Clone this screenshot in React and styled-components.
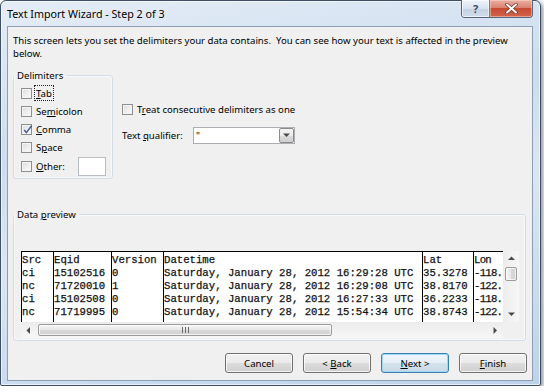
import React from "react";
import styled, { createGlobalStyle } from "styled-components";

const GlobalStyle = createGlobalStyle`
  body {
    margin: 0;
    background: #ffffff;
  }
`;

const UI_FONT = `"Noto Sans", "Open Sans", sans-serif`;
const MONO_FONT = `"Liberation Mono", "Courier New", monospace`;

const Window = styled.div`
  box-sizing: border-box;
  width: 541px;
  height: 386px;
  border: 1px solid #3d5068;
  border-radius: 6px 6px 2px 2px;
  padding: 0 7px 4px 6px;
  display: flex;
  flex-direction: column;
  background: linear-gradient(170deg, #e4edf7 0%, #cddcee 35%, #dbe6f3 55%, #bed3ea 100%);
  box-shadow: 2px 2px 5px rgba(0, 0, 0, 0.45), inset 0 0 0 1px rgba(255, 255, 255, 0.6);
  font-family: ${UI_FONT};
  font-size: 9.6px;
  color: #000;
`;

const TitleBar = styled.div`
  height: 25px;
  display: flex;
  align-items: flex-start;
`;

const Title = styled.div`
  padding-top: 6.5px;
  line-height: 13px;
  font-size: 10.7px;
  color: #000;
  text-shadow: 0 0 6px rgba(255, 255, 255, 0.9);
`;

const CaptionButtons = styled.div`
  margin-left: auto;
  margin-top: -1px;
  display: flex;
  height: 18px;
  border: 1px solid #55657c;
  border-top: none;
  border-radius: 0 0 4px 4px;
  overflow: hidden;
  box-sizing: border-box;
`;

const HelpButton = styled.div`
  width: 27px;
  display: flex;
  align-items: center;
  justify-content: center;
  border-right: 1px solid #6d7d94;
  background: linear-gradient(#eef3f9 0%, #d8e2ee 50%, #c3d1e2 51%, #cfdceb 100%);
  box-shadow: inset 0 0 0 1px rgba(255, 255, 255, 0.6);
  color: #3a4a60;
  font-size: 11px;
  font-weight: 700;
  line-height: 1;
`;

const CloseButton = styled.div`
  width: 42px;
  display: flex;
  align-items: center;
  justify-content: center;
  background: linear-gradient(#eab0a4 0%, #d9826f 45%, #c74a34 50%, #d3644b 100%);
  box-shadow: inset 0 0 0 1px rgba(255, 220, 210, 0.5);
`;

const Client = styled.div`
  box-sizing: border-box;
  flex: 1;
  border: 1px solid #8c9fb7;
  background: #f0f0f0;
  padding: 0 5px;
  display: flex;
  flex-direction: column;
`;

const Intro = styled.p`
  margin: 6.5px 0 0;
  line-height: 13px;
  white-space: nowrap;
`;

const OptionsRow = styled.div`
  display: flex;
  align-items: flex-start;
  margin-top: 9px;
`;

const GroupBox = styled.fieldset`
  box-sizing: border-box;
  margin: 0;
  padding: 0;
  min-width: 0;
  width: ${(p) => p.$w}px;
  height: ${(p) => p.$h}px;
  border: 1px solid #d5dde4;
  border-radius: 3px;
  box-shadow: inset 0 0 0 1px rgba(255, 255, 255, 0.6);
`;

const Legend = styled.legend`
  padding: 0 3px;
  margin-left: 0;
  line-height: 13px;
`;

const DelimList = styled.div`
  display: flex;
  flex-direction: column;
  padding: 2.8px 6px 0 7px;
`;

const CheckRow = styled.div`
  display: flex;
  align-items: center;
  gap: 4px;
  height: ${(p) => p.$h || 18}px;
`;

const Box = styled.span`
  box-sizing: border-box;
  flex: none;
  width: 11px;
  height: 11px;
  border: 1px solid #8e8f8f;
  background: linear-gradient(135deg, #dcdcdc 0%, #f0f0f0 60%, #fbfbfb 100%);
  box-shadow: inset 0 0 0 1px #f4f4f4;
  position: relative;
  svg {
    position: absolute;
    left: 0;
    top: -1px;
  }
`;

const Label = styled.span`
  line-height: 13px;
  white-space: nowrap;
  ${(p) =>
    p.$focused &&
    `
    outline: 1px dotted #222;
    outline-offset: 0;
    padding: 0.5px 1px;
    margin-left: -1px;
  `}
`;

const Key = styled.u`
  text-decoration: underline;
  text-underline-offset: 1px;
`;

const SmallInput = styled.div`
  box-sizing: border-box;
  margin-left: auto;
  width: 28px;
  height: 19px;
  border: 1px solid #b8bcc4;
  background: #fff;
`;

const SideOptions = styled.div`
  display: flex;
  flex-direction: column;
  margin-left: 9px;
  padding-top: 31.5px;
`;

const QualifierRow = styled.div`
  display: flex;
  align-items: center;
  margin-top: 9px;
  height: 17px;
`;

const QualifierLabel = styled.span`
  width: 71px;
  line-height: 13px;
`;

const Combo = styled.div`
  box-sizing: border-box;
  width: 102px;
  height: 17px;
  display: flex;
  border: 1px solid #abadb3;
  background: #fff;
`;

const ComboText = styled.span`
  flex: 1;
  padding-left: 2px;
  line-height: 15px;
  color: #000;
`;

const ComboButton = styled.div`
  box-sizing: border-box;
  width: 15px;
  display: flex;
  align-items: center;
  justify-content: center;
  border: 1px solid #8a8a8a;
  border-radius: 2px;
  background: linear-gradient(#f3f3f3 0%, #ebebeb 50%, #dcdcdc 51%, #cfcfcf 100%);
`;

const DataGroup = styled(GroupBox)`
  margin-top: 28.5px;
`;

const Preview = styled.div`
  margin: 30.5px 0 0 7px;
  width: 498px;
  height: 87px;
  display: grid;
  grid-template-columns: 482px 16px;
  grid-template-rows: 71px 16px;
`;

const Table = styled.div`
  display: flex;
  overflow: hidden;
  background: #fff;
  border-top: 1px solid #000;
`;

const Column = styled.div`
  box-sizing: border-box;
  flex: none;
  width: ${(p) => p.$w}px;
  border-left: 1px solid #000;
  padding-top: 2px;
  overflow: hidden;
  font-family: ${MONO_FONT};
  font-size: 10.67px;
  line-height: 13px;
  letter-spacing: ${(p) => p.$tight || 0}px;
  white-space: pre;
  color: #111;
  -webkit-text-stroke: 0.25px #111;
`;

const ScrollTrack = styled.div`
  display: flex;
  flex-direction: ${(p) => (p.$vertical ? "column" : "row")};
  background: linear-gradient(${(p) => (p.$vertical ? "90deg" : "180deg")}, #ececec, #f7f7f7);
`;

const Arrow = styled.div`
  flex: none;
  width: ${(p) => (p.$vertical ? "16px" : "15px")};
  height: ${(p) => (p.$vertical ? "15px" : "16px")};
  display: flex;
  align-items: center;
  justify-content: center;
  margin-top: ${(p) => p.$nudge || 0}px;
`;

const Thumb = styled.div`
  box-sizing: border-box;
  flex: none;
  display: flex;
  align-items: center;
  justify-content: center;
  border: 1px solid #9b9b9b;
  border-radius: 2px;
  background: linear-gradient(
    ${(p) => (p.$vertical ? "90deg" : "180deg")},
    #f4f4f4 0%,
    #e8e8e8 50%,
    #d9d9d9 51%,
    #d2d2d2 100%
  );
  box-shadow: inset 0 0 0 1px rgba(255, 255, 255, 0.7);
  ${(p) =>
    p.$vertical
      ? `width: 12px; height: 14px; margin: 1px 2px 0;`
      : `height: 12px; width: 294px; margin: 2px 0 0 2px;`}
`;

const Spacer = styled.div`
  flex: 1;
`;

const Corner = styled.div`
  background: #f0f0f0;
`;

const ButtonRow = styled.div`
  display: flex;
  justify-content: flex-end;
  gap: 10px;
  margin-top: 12.5px;
`;

const Button = styled.button`
  box-sizing: border-box;
  width: 68px;
  height: 20px;
  padding: 0;
  font-family: ${UI_FONT};
  font-size: 9.6px;
  color: #000;
  border-radius: 3px;
  border: 1px solid ${(p) => (p.$default ? "#3c7fb1" : "#707070")};
  background: ${(p) =>
    p.$default
      ? "linear-gradient(#f0f6fa 0%, #e4eef5 50%, #d3e2ec 51%, #c9dbe8 100%)"
      : "linear-gradient(#f2f2f2 0%, #ebebeb 50%, #dddddd 51%, #cfcfcf 100%)"};
  box-shadow: inset 0 0 0 1px ${(p) => (p.$default ? "#9fd7f5" : "rgba(255,255,255,0.75)")};
`;

const ArrowGlyph = ({ dir }) => {
  const paths = {
    up: "M0 4 L3.5 0.5 L7 4 Z",
    down: "M0 0.5 L3.5 4 L7 0.5 Z",
    left: "M4 0 L0.5 3.5 L4 7 Z",
    right: "M0.5 0 L4 3.5 L0.5 7 Z",
  };
  const vertical = dir === "up" || dir === "down";
  return (
    <svg width={vertical ? 7 : 5} height={vertical ? 5 : 7} viewBox={vertical ? "0 0 7 5" : "0 0 5 7"}>
      <path d={paths[dir]} fill="#4a4a4a" />
    </svg>
  );
};

const CheckBox = ({ checked }) => (
  <Box>
    {checked && (
      <svg width="12" height="12" viewBox="0 0 12 12">
        <path d="M2.2 6 L4.4 8.6 L9.6 1.8" fill="none" stroke="#4b5f92" strokeWidth="1.5" />
      </svg>
    )}
  </Box>
);

const columns = [
  { w: 32, rows: ["Src", "ci", "nc", "ci", "nc"] },
  { w: 58, rows: ["Eqid", "15102516", "71720010", "15102508", "71719995"] },
  { w: 52, rows: ["Version", "0", "1", "0", "0"] },
  {
    w: 259,
    rows: [
      "Datetime",
      "Saturday, January 28, 2012 16:29:28 UTC",
      "Saturday, January 28, 2012 16:29:08 UTC",
      "Saturday, January 28, 2012 16:27:33 UTC",
      "Saturday, January 28, 2012 15:54:34 UTC",
    ],
  },
  { w: 51, rows: ["Lat", "35.3278", "38.8170", "36.2233", "38.8743"] },
  { w: 30, tight: -0.75, rows: ["Lon", "-118.", "-122.", "-118.", "-122."] },
];

export default function App() {
  return (
    <>
      <GlobalStyle />
      <Window>
        <TitleBar>
          <Title>Text Import Wizard - Step 2 of 3</Title>
          <CaptionButtons>
            <HelpButton>?</HelpButton>
            <CloseButton>
              <svg width="13" height="11" viewBox="0 0 13 11">
                <path d="M2 1.5 L11 9.5 M11 1.5 L2 9.5" stroke="#7a2a1e" strokeWidth="3.4" strokeLinecap="round" />
                <path d="M2 1.5 L11 9.5 M11 1.5 L2 9.5" stroke="#ffffff" strokeWidth="2" strokeLinecap="round" />
              </svg>
            </CloseButton>
          </CaptionButtons>
        </TitleBar>

        <Client>
          <Intro>
            This screen lets you set the delimiters your data contains.&nbsp; You can see how your text is affected in the preview
            <br />
            below.
          </Intro>

          <OptionsRow>
            <GroupBox $w={100} $h={110.5}>
              <Legend>Delimiters</Legend>
              <DelimList>
                <CheckRow>
                  <CheckBox />
                  <Label $focused>
                    <Key>T</Key>ab
                  </Label>
                </CheckRow>
                <CheckRow>
                  <CheckBox />
                  <Label>
                    Se<Key>m</Key>icolon
                  </Label>
                </CheckRow>
                <CheckRow>
                  <CheckBox checked />
                  <Label>
                    <Key>C</Key>omma
                  </Label>
                </CheckRow>
                <CheckRow>
                  <CheckBox />
                  <Label>
                    S<Key>p</Key>ace
                  </Label>
                </CheckRow>
                <CheckRow $h={20}>
                  <CheckBox />
                  <Label>
                    <Key>O</Key>ther:
                  </Label>
                  <SmallInput />
                </CheckRow>
              </DelimList>
            </GroupBox>

            <SideOptions>
              <CheckRow>
                <CheckBox />
                <Label>
                  T<Key>r</Key>eat consecutive delimiters as one
                </Label>
              </CheckRow>
              <QualifierRow>
                <QualifierLabel>
                  Text <Key>q</Key>ualifier:
                </QualifierLabel>
                <Combo>
                  <ComboText>"</ComboText>
                  <ComboButton>
                    <ArrowGlyph dir="down" />
                  </ComboButton>
                </Combo>
              </QualifierRow>
            </SideOptions>
          </OptionsRow>

          <DataGroup $w={513} $h={133}>
            <Legend>
              Data <Key>p</Key>review
            </Legend>
            <Preview>
              <Table>
                {columns.map((c, i) => (
                  <Column key={i} $w={c.w} $tight={c.tight}>
                    {c.rows.join("\n")}
                  </Column>
                ))}
              </Table>
              <ScrollTrack $vertical>
                <Arrow $vertical>
                  <ArrowGlyph dir="up" />
                </Arrow>
                <Thumb $vertical />
                <Spacer />
                <Arrow $vertical $nudge={-2}>
                  <ArrowGlyph dir="down" />
                </Arrow>
              </ScrollTrack>
              <ScrollTrack>
                <Arrow>
                  <ArrowGlyph dir="left" />
                </Arrow>
                <Thumb>
                  <svg width="7" height="6" viewBox="0 0 7 6">
                    <path d="M0.5 0 V6 M3.5 0 V6 M6.5 0 V6" stroke="#6b6b6b" strokeWidth="1" />
                  </svg>
                </Thumb>
                <Spacer />
                <Arrow>
                  <ArrowGlyph dir="right" />
                </Arrow>
              </ScrollTrack>
              <Corner />
            </Preview>
          </DataGroup>

          <ButtonRow>
            <Button>Cancel</Button>
            <Button>
              &lt; <Key>B</Key>ack
            </Button>
            <Button $default>
              <Key>N</Key>ext &gt;
            </Button>
            <Button>
              <Key>F</Key>inish
            </Button>
          </ButtonRow>
        </Client>
      </Window>
    </>
  );
}
